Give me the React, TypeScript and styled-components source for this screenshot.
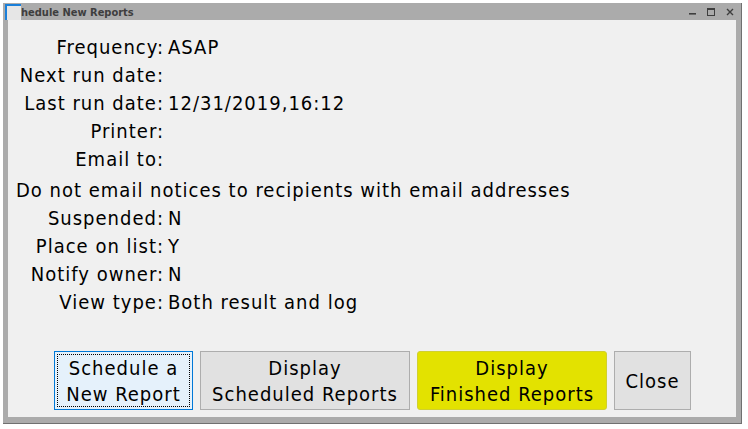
import React from "react";
import styled, { createGlobalStyle } from "styled-components";

const Global = createGlobalStyle`
  html, body { margin: 0; padding: 0; background: #ffffff; }
  body { width: 748px; height: 429px; overflow: hidden; }
`;

const FONT = `"DejaVu Sans Condensed", "DejaVu Sans", sans-serif`;

const Page = styled.div`
  width: 748px;
  height: 429px;
  padding: 3px 0 0 3px;
  box-sizing: border-box;
`;

const Window = styled.div`
  width: 739px;
  height: 421px;
  box-sizing: border-box;
  background: #ababab;
  border-right: 1px solid #707070;
  border-bottom: 1px solid #707070;
  display: flex;
  flex-direction: column;
  font-family: ${FONT};
  font-stretch: condensed;
`;

const TitleBar = styled.div`
  position: relative;
  height: 17px;
  flex: none;
  display: flex;
  align-items: center;
  padding: 0 6px 0 5px;
  color: #3e3e3e;
  font: bold 11px ${FONT};
`;

const TitleText = styled.span`
  flex: 1;
  margin-top: 1px;
`;

const AppIcon = styled.span`
  position: absolute;
  left: 2px;
  top: 1px;
  width: 14px;
  height: 14px;
  background: #e6e6e6;
  border-top: 2px solid #1a7fd9;
  border-left: 2px solid #1a7fd9;
`;

const Controls = styled.div`
  display: flex;
  align-items: center;
  gap: 10px;
  margin-right: 1px;
`;

const Body = styled.div`
  flex: 1;
  margin: 0 5px 6px 5px;
  background: #f0f0f0;
  display: flex;
  flex-direction: column;
  color: #000;
  font-size: 20px;
  letter-spacing: 1px;
`;

const Fields = styled.div`
  display: grid;
  grid-template-columns: 156px 1fr;
  column-gap: 4px;
  padding-top: 13px;
  line-height: 28px;
`;

const Label = styled.div`
  text-align: right;
  white-space: nowrap;
`;

const Value = styled.div`
  white-space: nowrap;
`;

const Notice = styled.div`
  grid-column: 1 / span 2;
  padding-left: 8px;
  margin-top: 3px;
  white-space: nowrap;
`;

const ButtonRow = styled.div`
  margin-top: auto;
  display: flex;
  justify-content: center;
  gap: 7px;
  padding-bottom: 7px;
`;

const Button = styled.button<{ $w: number; $variant?: "focus" | "highlight" }>`
  width: ${(p) => p.$w}px;
  height: 59px;
  box-sizing: border-box;
  font: 20px ${FONT};
  font-stretch: condensed;
  letter-spacing: 1px;
  line-height: 26px;
  color: #000;
  padding: 0 0 0 1px;
  position: relative;
  background: ${(p) =>
    p.$variant === "focus" ? "#e5f1fb" : p.$variant === "highlight" ? "#e3e200" : "#e1e1e1"};
  border: 1px solid
    ${(p) => (p.$variant === "focus" ? "#0078d7" : p.$variant === "highlight" ? "#d0d030" : "#adadad")};
  border-radius: ${(p) => (p.$variant === "highlight" ? "3px" : "0")};
`;

const FocusRing = styled.span`
  position: absolute;
  inset: 2px;
  border: 1px dotted #000;
  pointer-events: none;
`;

const Minimize = () => (
  <svg width="8" height="8" viewBox="0 0 8 8">
    <rect x="0" y="5" width="7" height="1.6" fill="#3e3e3e" />
  </svg>
);
const Restore = () => (
  <svg width="9" height="9" viewBox="0 0 9 9">
    <rect x="0.5" y="1.5" width="7" height="7" fill="none" stroke="#3e3e3e" strokeWidth="1" />
    <rect x="0.5" y="1.5" width="7" height="1.5" fill="#3e3e3e" />
  </svg>
);
const CloseX = () => (
  <svg width="8" height="8" viewBox="0 0 8 8">
    <path d="M1 1 L7 7 M7 1 L1 7" stroke="#3e3e3e" strokeWidth="1.4" />
  </svg>
);

const rows: [string, string][] = [
  ["Frequency:", "ASAP"],
  ["Next run date:", ""],
  ["Last run date:", "12/31/2019,16:12"],
  ["Printer:", ""],
  ["Email to:", ""],
];
const rows2: [string, string][] = [
  ["Suspended:", "N"],
  ["Place on list:", "Y"],
  ["Notify owner:", "N"],
  ["View type:", "Both result and log"],
];

export default function App() {
  return (
    <Page>
      <Global />
      <Window>
        <TitleBar>
          <TitleText>Schedule New Reports</TitleText>
          <AppIcon />
          <Controls>
            <Minimize />
            <Restore />
            <CloseX />
          </Controls>
        </TitleBar>
        <Body>
          <Fields>
            {rows.map(([l, v]) => (
              <React.Fragment key={l}>
                <Label>{l}</Label>
                <Value>{v}</Value>
              </React.Fragment>
            ))}
            <Notice>Do not email notices to recipients with email addresses</Notice>
            {rows2.map(([l, v]) => (
              <React.Fragment key={l}>
                <Label>{l}</Label>
                <Value>{v}</Value>
              </React.Fragment>
            ))}
          </Fields>
          <ButtonRow>
            <Button $w={139} $variant="focus">
              <FocusRing />
              Schedule a<br />New Report
            </Button>
            <Button $w={210}>
              Display<br />Scheduled Reports
            </Button>
            <Button $w={190} $variant="highlight">
              Display<br />Finished Reports
            </Button>
            <Button $w={77}>Close</Button>
          </ButtonRow>
        </Body>
      </Window>
    </Page>
  );
}
